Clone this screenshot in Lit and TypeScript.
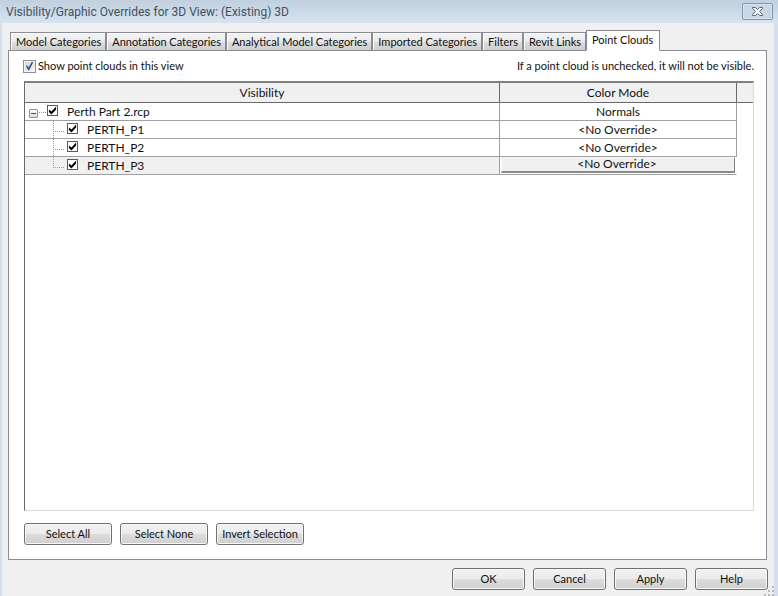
import { LitElement, html, css, svg, nothing } from "lit";
import { customElement, state } from "lit/decorators.js";
import { classMap } from "lit/directives/class-map.js";

interface Cloud {
  name: string;
  mode: string;
  level: number;
  checked: boolean;
}

const TABS = [
  "Model Categories",
  "Annotation Categories",
  "Analytical Model Categories",
  "Imported Categories",
  "Filters",
  "Revit Links",
  "Point Clouds",
];

const GRIP = [
  [8, 0],
  [4, 4],
  [8, 4],
  [0, 8],
  [4, 8],
  [8, 8],
];

@customElement("app-root")
export class AppRoot extends LitElement {
  @state() private tab = 6;
  @state() private show = true;
  @state() private selected = 3;
  @state() private open = true;
  @state() private rows: Cloud[] = [
    { name: "Perth Part 2.rcp", mode: "Normals", level: 0, checked: true },
    { name: "PERTH_P1", mode: "<No Override>", level: 1, checked: true },
    { name: "PERTH_P2", mode: "<No Override>", level: 1, checked: true },
    { name: "PERTH_P3", mode: "<No Override>", level: 1, checked: true },
  ];

  static styles = css`
    :host {
      display: flex;
      flex-direction: column;
      box-sizing: border-box;
      min-height: 100vh;
      position: relative;
      background: #f0f0f0;
      border-left: 2px solid #d5e1f0;
      border-right: 4px solid #d3e0ec;
      color: #111;
      font: 11px/16px Lato, "Noto Sans", sans-serif;
    }
    * {
      box-sizing: border-box;
    }
    button,
    input {
      font: inherit;
      color: inherit;
      margin: 0;
    }
    .title {
      display: flex;
      align-items: flex-start;
      justify-content: space-between;
      height: 23px;
      margin: 0 -4px 0 -2px;
      padding: 3px 5px 0 6px;
      background: linear-gradient(#c1cfde, #d6e3f0);
      color: #42525f;
    }
    h1 {
      margin: 0;
      font-family: Roboto, "Noto Sans", sans-serif;
      font-weight: 400;
      font-size: 12px;
      line-height: 18px;
    }
    .close {
      display: flex;
      align-items: center;
      justify-content: center;
      width: 31px;
      height: 17px;
      padding: 0;
      border: 1px solid #8795ab;
      border-radius: 2px;
      background: #c8d6e6;
      box-shadow: inset 0 0 0 1px #d7e3ef;
    }
    .body {
      flex: 1;
      display: flex;
      flex-direction: column;
      padding: 7px 7px 6px 6px;
    }
    .tabs {
      display: flex;
      align-items: flex-end;
      padding-left: 2px;
      height: 21px;
      margin-bottom: -1px;
      position: relative;
    }
    .tab {
      height: 19px;
      padding: 0 4px 0 5px;
      margin-right: -1px;
      border: 1px solid #898c95;
      border-right: 2px solid #898c95;
      background: linear-gradient(#f3f3f3, #ebebeb 50%, #dddddd 50%, #cfcfcf);
      box-shadow: inset 1px 1px 0 #fafafa;
      line-height: 17px;
      white-space: nowrap;
    }
    .tab.active {
      height: 21px;
      padding: 0 6px 2px 5px;
      border-right-width: 1px;
      border-bottom-color: #fff;
      background: #fff;
    }
    .panel {
      flex: 1;
      display: flex;
      flex-direction: column;
      border: 1px solid #898c95;
      background: #fff;
      padding: 7px 12px 14px 14px;
    }
    .options {
      display: flex;
      justify-content: space-between;
      height: 23px;
    }
    .options label {
      display: flex;
      gap: 2px;
      height: 16px;
      align-items: center;
    }
    .check {
      appearance: none;
      display: grid;
      place-items: center;
      width: 11px;
      height: 11px;
      border: 1px solid #5a5a5a;
      background: #fff;
    }
    .check:checked::after {
      content: "";
      width: 9px;
      height: 9px;
      background: #000;
      clip-path: polygon(10% 38%, 38% 62%, 90% 6%, 90% 38%, 38% 94%, 10% 68%);
    }
    .themed {
      width: 13px;
      height: 13px;
      border-color: #8e8f8f;
      background: linear-gradient(135deg, #cfd5dd, #f6f6f6);
      box-shadow: inset 0 0 0 1px #f4f4f4;
    }
    .themed:checked::after {
      background: #3d4f8f;
      clip-path: polygon(10% 48%, 26% 44%, 40% 66%, 76% 4%, 92% 8%, 46% 98%, 34% 98%);
    }
    .grid {
      flex: 1;
      margin-left: 1px;
      border: 1px solid #dcdcdc;
      border-top: 2px solid #808080;
      border-left: 1px solid #696969;
    }
    table {
      width: 100%;
      table-layout: fixed;
      border-collapse: separate;
      border-spacing: 0;
      font-size: 12px;
    }
    .mode {
      width: 237px;
    }
    .rest {
      width: 16px;
    }
    th {
      height: 20px;
      padding: 0;
      font-weight: 400;
      background: #f0f0f0;
      border-right: 1px solid #696969;
      border-bottom: 1px solid #696969;
    }
    th:last-child {
      border-right: 0;
    }
    td {
      height: 18px;
      padding: 0;
      line-height: 17px;
      border-right: 1px solid #a0a0a0;
      border-bottom: 1px solid #a0a0a0;
      text-align: center;
    }
    td:last-child {
      border: 0;
    }
    .current td:first-child {
      background: #f0f0f0;
    }
    .current td:nth-child(2) {
      padding: 0 1px 1px;
      border-right-color: #fff;
    }
    .tree {
      display: flex;
      align-items: center;
      height: 17px;
    }
    .tree label {
      display: flex;
      align-items: center;
      gap: 9px;
    }
    .tree .check {
      margin-bottom: 2px;
    }
    .toggle {
      width: 9px;
      height: 9px;
      margin: 3px 0 0 4px;
      padding: 0;
      border: 1px solid #919191;
      border-radius: 1px;
      background: linear-gradient(#fff, #ddd);
      display: grid;
      place-items: center;
    }
    .toggle svg,
    .close svg {
      display: block;
    }
    .dots {
      width: 9px;
      height: 1px;
      margin: 2px 0 0;
      background: repeating-linear-gradient(90deg, #fff 0 1px, #999 1px 2px);
    }
    .branch {
      align-self: stretch;
      width: 14px;
      margin-left: 28px;
      display: block;
    }
    .override {
      display: block;
      width: 100%;
      height: 16px;
      padding: 0 2px 1px 0;
      border: 1px solid #f8f8f8;
      border-right: 1px solid #808080;
      border-bottom: 2px solid #8a8a8a;
      background: #f0f0f0;
      line-height: 12px;
    }
    .actions {
      display: flex;
      gap: 8px;
      margin: 12px 0 0 1px;
    }
    .push {
      height: 22px;
      padding: 0;
      border: 1px solid #707070;
      border-radius: 3px;
      background: linear-gradient(#f2f2f2, #ebebeb 50%, #dddddd 50%, #cfcfcf);
      box-shadow: inset 0 0 0 1px #f8f8f8;
      white-space: nowrap;
    }
    .actions .push {
      width: 88px;
    }
    .footer {
      display: flex;
      justify-content: flex-end;
      gap: 8px;
      margin: 8px -1px 0 0;
    }
    .footer .push {
      width: 73px;
    }
    .grip {
      position: absolute;
      right: 0;
      bottom: 0;
    }
  `;

  private setAll(fn: (checked: boolean) => boolean) {
    this.rows = this.rows.map((r) => ({ ...r, checked: fn(r.checked) }));
  }

  private check(index: number) {
    this.rows = this.rows.map((r, i) =>
      i === index ? { ...r, checked: !r.checked } : r
    );
  }

  private branch(last: boolean) {
    return html`<svg class="branch" width="14" height="17" aria-hidden="true">
      <path d="M.5 0V${last ? 11 : 17}" stroke="#999" stroke-dasharray="1 1" />
      <path d="M2 10.500H12" stroke="#999" stroke-dasharray="1 1" />
    </svg>`;
  }

  private row(r: Cloud, i: number) {
    const current = i === this.selected;
    if (r.level && !this.open) return nothing;
    return html`<tr
      class=${classMap({ current })}
      @click=${() => (this.selected = i)}
    >
      <td>
        <div class="tree">
          ${r.level
            ? this.branch(i === this.rows.length - 1)
            : html`<button
                  class="toggle"
                  aria-label="Toggle"
                  aria-expanded=${this.open}
                  @click=${() => (this.open = !this.open)}
                >
                  <svg width="5" height="5">
                    <path d="M0 2.500H5" stroke="#3a4a80" />
                  </svg></button
                ><span class="dots"></span>`}
          <label>
            <input
              class="check"
              type="checkbox"
              .checked=${r.checked}
              @change=${() => this.check(i)}
            />${r.name}
          </label>
        </div>
      </td>
      <td>
        ${current ? html`<button class="override">${r.mode}</button>` : r.mode}
      </td>
      <td></td>
    </tr>`;
  }

  render() {
    return html`
      <header class="title">
        <h1>Visibility/Graphic Overrides for 3D View: (Existing) 3D</h1>
        <button class="close" aria-label="Close">
          <svg width="13" height="11" viewBox="0 0 13 11">
            <path
              d="M1.500 1.500H4.500L6.500 3.500L8.500 1.500H11.500V2.500L8.500 5.500L11.500 8.500V9.500H8.500L6.500 7.500L4.500 9.500H1.500V8.500L4.500 5.500L1.500 2.500Z"
              fill="#f6f8fa"
              stroke="#5b6472"
            />
          </svg>
        </button>
      </header>
      <main class="body">
        <div class="tabs" role="tablist">
          ${TABS.map(
            (t, i) => html`<button
              role="tab"
              aria-selected=${i === this.tab}
              class=${classMap({ tab: true, active: i === this.tab })}
              @click=${() => (this.tab = i)}
            >
              ${t}
            </button>`
          )}
        </div>
        <section class="panel" role="tabpanel">
          <div class="options">
            <label>
              <input
                class="check themed"
                type="checkbox"
                .checked=${this.show}
                @change=${() => (this.show = !this.show)}
              />Show point clouds in this view
            </label>
            <span>If a point cloud is unchecked, it will not be visible.</span>
          </div>
          <div class="grid">
            <table>
              <colgroup>
                <col />
                <col class="mode" />
                <col class="rest" />
              </colgroup>
              <thead>
                <tr>
                  <th scope="col">Visibility</th>
                  <th scope="col">Color Mode</th>
                  <th></th>
                </tr>
              </thead>
              <tbody>
                ${this.rows.map((r, i) => this.row(r, i))}
              </tbody>
            </table>
          </div>
          <div class="actions">
            <button class="push" @click=${() => this.setAll(() => true)}>
              Select All
            </button>
            <button class="push" @click=${() => this.setAll(() => false)}>
              Select None
            </button>
            <button class="push" @click=${() => this.setAll((c) => !c)}>
              Invert Selection
            </button>
          </div>
        </section>
        <footer class="footer">
          ${["OK", "Cancel", "Apply", "Help"].map(
            (b) => html`<button class="push">${b}</button>`
          )}
        </footer>
      </main>
      <svg class="grip" width="10" height="10" aria-hidden="true">
        ${GRIP.map(
          ([x, y]) =>
            svg`<rect x=${x} y=${y} width="2" height="2" fill="#b8b8b8" />`
        )}
      </svg>
    `;
  }
}
